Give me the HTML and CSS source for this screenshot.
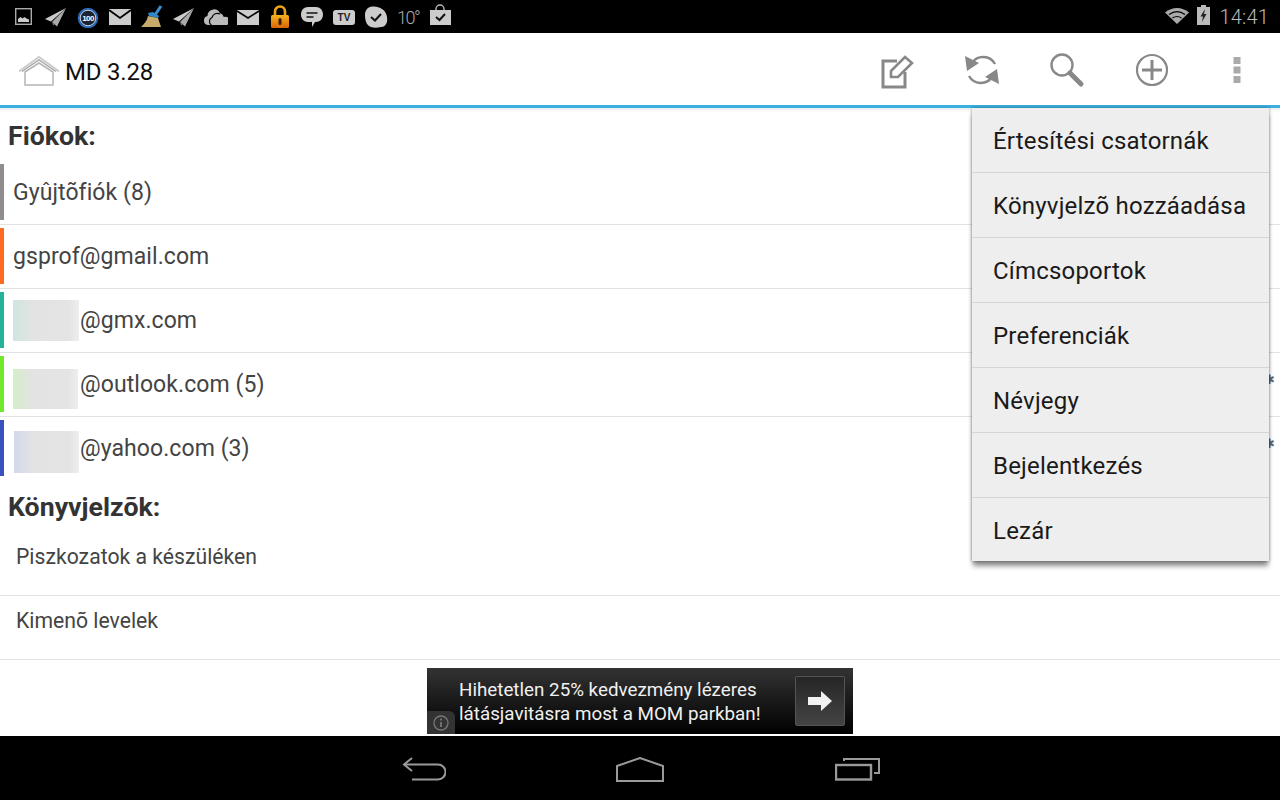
FILE: index.html
```html
<!DOCTYPE html>
<html lang="hu">
<head>
<meta charset="utf-8">
<title>MD 3.28</title>
<link rel="stylesheet" href="styles.css">
</head>
<body>
<div class="screen">
  <header class="status">
    <div class="notifs">
      <svg class="si" viewBox="0 0 24 24"><rect x="3.700" y="4.700" width="15.600" height="15.600" fill="none" stroke="#aaa" stroke-width="1.400"/><path d="M6 18v-3l2.500-2 2 1.500 2-1.500 2 1.500 2.500 1V18z" fill="#ccc"/></svg>
      <svg class="si" viewBox="0 0 24 24"><path d="M22 4 1 15l6 2.500z" fill="#ccc"/><path d="M22 4 8 18l5 4.500z" fill="#aaa"/><path d="M8 18l1 3.500 2-1.500z" fill="#777"/></svg>
      <svg class="si" viewBox="0 0 24 24"><circle cx="12" cy="14" r="10.300" fill="#2a68b4"/><circle cx="12" cy="14" r="7.800" fill="#1a2433" stroke="#ccd" stroke-width="1"/><text x="12" y="17.400" class="badge-num">100</text></svg>
      <svg class="si" viewBox="0 0 24 24"><rect x="1" y="5" width="22" height="16" fill="#ccc"/><path d="M1 6l11 8 11-8" fill="none" stroke="#000" stroke-width="1.800"/></svg>
      <svg class="si" viewBox="0 0 24 24"><path d="M21 2l-6 9" stroke="#3a8fd0" stroke-width="3" fill="none"/><path d="M8 9l5-1 6 4-1 2-9-2z" fill="#2f86c8"/><path d="M8 12l10 2 3 9H1c3-3 6-6 7-11z" fill="#c8ab6a"/></svg>
      <svg class="si" viewBox="0 0 24 24"><path d="M22 4 1 15l6 2.500z" fill="#ccc"/><path d="M22 4 8 18l5 4.500z" fill="#aaa"/><path d="M8 18l1 3.500 2-1.500z" fill="#777"/></svg>
      <svg class="si" viewBox="0 0 24 24"><path d="M4.500 21a4.500 4.500 0 0 1-1-8.900 6.500 6.500 0 0 1 12.300-3.100 5.500 5.500 0 0 1 4 4 4 4 0 0 1 3 8z" fill="#bbb"/><path d="M7.500 21a4.200 4.200 0 0 1 .5-7.500 5.500 5.500 0 0 1 8-3.500" fill="none" stroke="#000" stroke-width="1.200"/></svg>
      <svg class="si" viewBox="0 0 24 24"><rect x="1" y="6" width="22" height="15" fill="#ccc"/><path d="M1 7l11 7 11-7" fill="none" stroke="#000" stroke-width="1.600"/></svg>
      <svg class="si" viewBox="0 0 24 24"><defs><linearGradient id="lk" x1="0" y1="0" x2="0" y2="1"><stop offset="0" stop-color="#f5b21c"/><stop offset="1" stop-color="#d9660a"/></linearGradient></defs><path d="M7 12V7.500a5 5 0 0 1 10 0V12" fill="none" stroke="#eea515" stroke-width="2.600"/><rect x="3" y="11" width="18" height="13" rx="1.500" fill="url(#lk)"/><rect x="10.500" y="14" width="3" height="7" rx="1.500" fill="#3a2000"/></svg>
      <svg class="si" viewBox="0 0 24 24"><path d="M8 3h8c4 0 7 3 7 7.500S20 18 16 18h-1l-3 5v-5H8c-4 0-7-3-7-7.500S4 3 8 3z" fill="#ccc"/><path d="M6.500 9h11M6.500 13h7" stroke="#111" stroke-width="1.700"/></svg>
      <svg class="si" viewBox="0 0 24 24"><rect x="1" y="6" width="22" height="15" rx="3" fill="#ccc"/><text x="12" y="17.300" class="tv">TV</text></svg>
      <svg class="si" viewBox="0 0 24 24"><path d="M6 3c5-1 9 0 12 2 4 2 6 8 5 13-1 3-3 5-6 5-5 1-9 1-12-1C2 20 1 15 1 11c0-4 2-7 5-8z" fill="#ccc"/><path d="M7 13l4 3.500 6-6.500" fill="none" stroke="#111" stroke-width="2"/></svg>
      <span class="temp">10°</span>
      <svg class="si" viewBox="0 0 24 24"><path d="M8 7V5a4 4 0 0 1 8 0v2" fill="none" stroke="#bbb" stroke-width="1.400"/><rect x="2" y="6" width="21" height="15" fill="#ccc"/><path d="M8 13l3.500 3 5.500-6" fill="none" stroke="#111" stroke-width="2"/></svg>
    </div>
    <div class="sys">
      <svg class="wifi" viewBox="0 0 24 16"><path d="M0 4.500C7-1.500 17-1.500 24 4.500L12 16z" fill="#aaa"/><path d="M4 6.500C9 3 15 3 20 6.500M7.500 10c3-2 6-2 9 0" fill="none" stroke="#000" stroke-width="1.200"/></svg>
      <svg class="batt" viewBox="0 0 13 20"><path d="M4 0h5v2h4v18H0V2h4z" fill="#bbb"/><path d="M8 4 3.500 11.500H6L5 17l4.500-8H7z" fill="#222"/></svg>
      <span class="clock">14:41</span>
    </div>
  </header>

  <div class="actionbar">
    <div class="brand">
      <svg class="home" viewBox="0 0 40 30"><path d="M0 15.500 20 1l20 14.500" fill="none" stroke="#ccc" stroke-width="2"/><path d="M3 15.500 20 4l17 11.500" fill="none" stroke="#aaa" stroke-width="1.500"/><path d="M6 16v13h28V16L20 7z" fill="#fff" stroke="#b5b5b5" stroke-width="1.500"/></svg>
      <span class="title">MD 3.28</span>
    </div>
    <nav class="actions">
      <button class="act"><svg viewBox="0 0 40 40"><path d="M20 11H6v26h22V22" fill="none" stroke="#888" stroke-width="3"/><path d="M14 21 28 7l7 6-14 14h-7z" fill="#fff" stroke="#888" stroke-width="2.600"/></svg></button>
      <button class="act"><svg viewBox="0 0 40 40"><path d="M10 13A13.500 13.500 0 0 1 33 14" fill="none" stroke="#888" stroke-width="2.400"/><path d="M3 6l2 15 12-8z" fill="#888"/><path d="M30 27A13.500 13.500 0 0 1 7 26" fill="none" stroke="#888" stroke-width="2.400"/><path d="M37 34l-2-15-12 8z" fill="#888"/></svg></button>
      <button class="act"><svg viewBox="0 0 40 40"><circle cx="15" cy="15" r="10.500" fill="none" stroke="#888" stroke-width="2.400"/><path d="M23 23l11 11" stroke="#888" stroke-width="5" stroke-linecap="round"/></svg></button>
      <button class="act"><svg viewBox="0 0 40 40"><circle cx="20" cy="20" r="15" fill="none" stroke="#888" stroke-width="2.200"/><path d="M20 10v20M10 20h20" stroke="#888" stroke-width="3"/></svg></button>
      <button class="act"><svg viewBox="0 0 40 40"><path d="M16.500 7h7v7h-7zM16.500 16.500h7v7h-7zM16.500 26h7v7h-7z" fill="#aaa"/></svg></button>
    </nav>
  </div>

  <main class="content">
    <div class="heading first"><span>Fiókok:</span><i class="dot"></i></div>
    <div class="row"><i class="bar gray"></i><span class="label">Gyûjtõfiók (8)</span></div>
    <div class="row"><i class="bar orange"></i><span class="label">gsprof@gmail.com</span></div>
    <div class="row"><i class="bar teal"></i><i class="blur b1"></i><span class="label">@gmx.com</span></div>
    <div class="row"><i class="bar lime"></i><i class="blur b2"></i><span class="label">@outlook.com (5)</span><span class="star">✱</span></div>
    <div class="row last"><i class="bar blue"></i><i class="blur b3"></i><span class="label">@yahoo.com (3)</span><span class="star">✱</span></div>
    <div class="heading second"><span>Könyvjelzõk:</span><i class="dot"></i></div>
    <div class="row small"><span class="label">Piszkozatok a készüléken</span></div>
    <div class="row small"><span class="label">Kimenõ levelek</span></div>
  </main>

  <aside class="ad">
    <div class="ad-text">Hihetetlen 25% kedvezmény lézeres<br>látásjavitásra most a MOM parkban!</div>
    <div class="ad-btn"><svg viewBox="0 0 26 22"><path d="M1 7h13V1l11 10-11 10v-6H1z" fill="#f2f2f2"/></svg></div>
    <div class="ad-info"><svg viewBox="0 0 18 18"><circle cx="9" cy="9" r="7" fill="none" stroke="#777" stroke-width="1.300"/><path d="M9 8v5M9 4.500v2" stroke="#777" stroke-width="1.800"/></svg></div>
  </aside>

  <footer class="navbar">
    <svg class="nav-back" viewBox="0 0 44 24"><path d="M10 1 2 7.500l8 6.500" fill="none" stroke="#9a9a9a" stroke-width="2"/><path d="M2 7.500h34a6.500 6.500 0 0 1 0 15H10" fill="none" stroke="#9a9a9a" stroke-width="2"/></svg>
    <svg class="nav-home" viewBox="0 0 48 25"><path d="M1 9 24 1l23 8v15H1z" fill="none" stroke="#9a9a9a" stroke-width="2"/></svg>
    <svg class="nav-recent" viewBox="0 0 46 24"><rect x="1" y="8" width="35" height="14.500" fill="none" stroke="#9a9a9a" stroke-width="2.400"/><path d="M9 4V2h35v14h-5" fill="none" stroke="#9a9a9a" stroke-width="2"/></svg>
  </footer>

  <ul class="menu">
    <li>Értesítési csatornák</li>
    <li>Könyvjelzõ hozzáadása</li>
    <li>Címcsoportok</li>
    <li>Preferenciák</li>
    <li>Névjegy</li>
    <li>Bejelentkezés</li>
    <li>Lezár</li>
  </ul>
</div>
</body>
</html>
```

FILE: styles.css
```css
* { box-sizing: border-box; }
html, body { margin: 0; padding: 0; }
body { font-family: Roboto, "Liberation Sans", sans-serif; background: #fff; }

.screen {
  position: relative;
  width: 1280px;
  height: 800px;
  overflow: hidden;
  display: flex;
  flex-direction: column;
}

/* status bar */
.status {
  height: 33px;
  flex: none;
  background: #000;
  display: flex;
  justify-content: space-between;
  padding: 4px 11px 0 12px;
}
.notifs { display: flex; gap: 8px; align-items: flex-start; }
.si { width: 24px; height: 24px; display: block; flex: none; }
.badge-num { font: 700 8px "Liberation Sans", sans-serif; fill: #fff; text-anchor: middle; letter-spacing: -.6px; }
.tv { font: 700 10px "Liberation Sans", sans-serif; fill: #222; text-anchor: middle; }
.temp {
  width: 24px;
  padding-left: 1px;
  font-size: 18px;
  font-weight: 300;
  line-height: 27px;
  color: #aaa;
  white-space: nowrap;
  letter-spacing: -1.500px;
}
.sys { display: flex; align-items: flex-start; }
.wifi { width: 24px; height: 16px; margin-top: 4px; }
.batt { width: 13px; height: 20px; margin: 1px 9px 0 8px; }
.clock { font-size: 20px; font-weight: 300; line-height: 26px; color: #bbb; letter-spacing: .2px; }

/* action bar */
.actionbar {
  height: 75px;
  flex: none;
  border-bottom: 3px solid #39b0e0;
  display: flex;
  justify-content: space-between;
  align-items: center;
  background: #fff;
}
.brand { display: flex; align-items: center; padding-left: 19px; }
.home { width: 40px; height: 30px; display: block; margin-top: 4px; }
.title { font-size: 24px; color: #111; margin: 5px 0 0 6px; letter-spacing: -.2px; }
.actions { display: flex; }
.act {
  width: 85.2px;
  height: 72px;
  padding: 0;
  border: 0;
  background: none;
  display: flex;
  align-items: center;
  justify-content: center;
}
.act svg { width: 40px; height: 40px; display: block; margin-top: 1px; }

/* list */
.content { flex: 1; position: relative; background: linear-gradient(#ececec, #fff 4px); }
.heading {
  font-size: 26.700px;
  font-weight: 700;
  color: #333;
  padding: 0 8px 0 8px;
  display: flex;
  justify-content: space-between;
}
.heading.first { height: 53px; line-height: 56px; }
.heading.second { height: 51px; line-height: 52px; }
.dot { width: 3px; height: 3px; background: #888; border-radius: 50%; margin: 28px 6px 0 0; }
.row {
  height: 64px;
  padding: 3px 0 4px;
  border-bottom: 1px solid #e2e2e2;
  display: flex;
  align-items: center;
  position: relative;
}
.row.last { border-bottom: 0; padding-bottom: 5px; }
.bar { width: 4px; height: 56px; flex: none; margin-right: 9px; }
.gray { background: #8f8b8e; }
.orange { background: #ff6a23; }
.teal { background: #24b299; }
.lime { background: #72e82a; }
.blue { background: #3a52c0; }
.label { font-size: 23px; color: #444; white-space: nowrap; letter-spacing: .07px; }
.blur { width: 66px; flex: none; margin-right: 1px; }
.b1 { height: 41px; margin-top: 1px; background: linear-gradient(90deg, #cfe6e0, #e3e3e3 30%, #e4e4e4 85%, #eee); }
.b2 { height: 40px; width: 65px; margin-top: 10px; margin-right: 2px; background: linear-gradient(90deg, #d5eec8, #e3e3e3 30%, #e4e4e4 85%, #eee); }
.b3 { height: 42px; width: 65px; margin-top: 8px; margin-left: 1px; background: linear-gradient(90deg, #d2d8ec, #e3e3e3 30%, #e4e4e4 85%, #eee); }
.star { margin-left: auto; margin-right: 5px; margin-top: -8px; font-size: 13px; line-height: 16px; color: #666; }
.row.small { padding: 0 0 15px 16px; }
.row.small .label { font-size: 21.200px; letter-spacing: 0; }

/* ad */
.ad {
  position: relative;
  flex: none;
  width: 426px;
  height: 66px;
  margin: 8px auto 2px 427px;
  background: linear-gradient(#333, #000);
  color: #f0f0f0;
  display: flex;
  align-items: center;
  justify-content: space-between;
  padding: 0 8px 0 32px;
}
.ad-text { font-size: 18.800px; line-height: 24px; white-space: nowrap; margin-top: 2px; }
.ad-btn {
  width: 50px;
  height: 50px;
  background: linear-gradient(#262626, #444);
  border: 1px solid #555;
  border-radius: 2px;
  display: flex;
  align-items: center;
  justify-content: center;
}
.ad-btn svg { width: 26px; height: 22px; display: block; }
.ad-info {
  position: absolute;
  left: 0;
  bottom: 0;
  width: 28px;
  height: 23px;
  background: #333;
  border-top-right-radius: 6px;
  display: flex;
  align-items: center;
  justify-content: center;
}
.ad-info svg { width: 18px; height: 18px; display: block; }

/* nav bar */
.navbar {
  height: 64px;
  flex: none;
  background: #000;
  display: flex;
  align-items: flex-start;
  padding: 21px 0 0 402px;
}
.nav-back { width: 44px; height: 24px; margin-right: 170px; }
.nav-home { width: 48px; height: 25px; margin-right: 171px; }
.nav-recent { width: 46px; height: 24px; }

/* overflow menu */
.menu {
  position: absolute;
  top: 108px;
  left: 972px;
  width: 297px;
  height: 453px;
  margin: 0;
  padding: 0;
  list-style: none;
  background: #eee;
  box-shadow: 0 6px 5px -1px rgba(0, 0, 0, .45), 0 0 3px rgba(0, 0, 0, .4);
}
.menu li {
  height: 65px;
  line-height: 67px;
  padding-left: 21px;
  font-size: 24px;
  letter-spacing: .2px;
  color: #1a1a1a;
  border-bottom: 1px solid #d5d5d5;
  white-space: nowrap;
}
.menu li:last-child { border-bottom: 0; height: 63px; }
```
